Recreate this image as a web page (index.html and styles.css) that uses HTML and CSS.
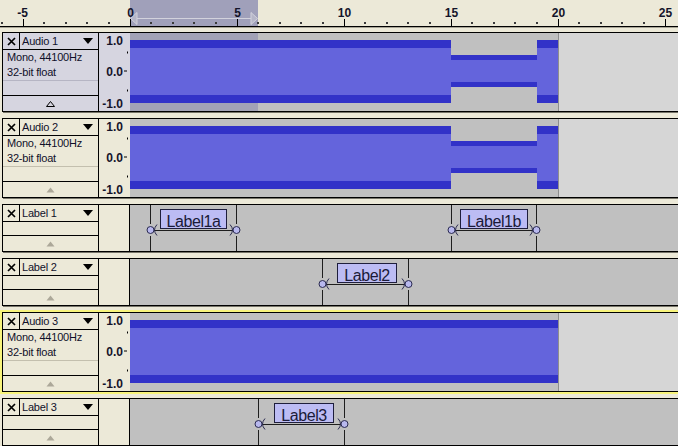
FILE: index.html
```html
<!DOCTYPE html>
<html lang="en">
<head>
<meta charset="UTF-8">
<title>Audacity</title>
<link rel="stylesheet" href="styles.css">
</head>
<body>

<!-- time ruler: 0 s at x=130, 21.4 px per second -->
<div class="ruler">
    <svg width="678" height="26">
        <rect class="ruler-sel" x="130" y="0" width="128" height="26"/>
        <g class="play-region">
            <path d="M137 18.5H251"/>
            <path d="M137 12.5L130.5 18.5L137 24.5Z"/>
            <path d="M251 12.5L257.5 18.5L251 24.5Z"/>
        </g>
        <g class="tick-minor">
            <rect x="1" y="22" width="2" height="2"/>
            <rect x="43" y="22" width="2" height="2"/>
            <rect x="65" y="22" width="2" height="2"/>
            <rect x="86" y="22" width="2" height="2"/>
            <rect x="108" y="22" width="2" height="2"/>
            <rect x="150" y="22" width="2" height="2"/>
            <rect x="172" y="22" width="2" height="2"/>
            <rect x="193" y="22" width="2" height="2"/>
            <rect x="215" y="22" width="2" height="2"/>
            <rect x="257" y="22" width="2" height="2"/>
            <rect x="279" y="22" width="2" height="2"/>
            <rect x="300" y="22" width="2" height="2"/>
            <rect x="322" y="22" width="2" height="2"/>
            <rect x="364" y="22" width="2" height="2"/>
            <rect x="386" y="22" width="2" height="2"/>
            <rect x="407" y="22" width="2" height="2"/>
            <rect x="429" y="22" width="2" height="2"/>
            <rect x="471" y="22" width="2" height="2"/>
            <rect x="493" y="22" width="2" height="2"/>
            <rect x="514" y="22" width="2" height="2"/>
            <rect x="536" y="22" width="2" height="2"/>
            <rect x="578" y="22" width="2" height="2"/>
            <rect x="600" y="22" width="2" height="2"/>
            <rect x="621" y="22" width="2" height="2"/>
            <rect x="643" y="22" width="2" height="2"/>
        </g>
        <g class="tick-major">
            <rect x="23" y="19" width="1" height="7"/>
            <rect x="130" y="19" width="1" height="7"/>
            <rect x="237" y="19" width="1" height="7"/>
            <rect x="344" y="19" width="1" height="7"/>
            <rect x="451" y="19" width="1" height="7"/>
            <rect x="558" y="19" width="1" height="7"/>
            <rect x="665" y="19" width="1" height="7"/>
        </g>
        <g class="ruler-num">
            <text x="22.5" y="17">-5</text>
            <text x="130.5" y="17">0</text>
            <text x="237.5" y="17">5</text>
            <text x="344.5" y="17">10</text>
            <text x="451.5" y="17">15</text>
            <text x="558.5" y="17">20</text>
            <text x="665.5" y="17">25</text>
        </g>
    </svg>
</div>

<!-- Audio 1 (selected) -->
<div class="track audio sel">
    <div class="ctrl">
        <div class="head">
            <span class="close"><svg width="9" height="9"><path d="M1 1L8 8M8 1L1 8"/></svg></span>
            <span class="name">Audio 1<i class="menu"></i></span>
        </div>
        <div class="info">Mono, 44100Hz<br>32-bit float</div>
        <div class="blank"></div>
        <div class="fold"><svg width="9" height="6"><polygon points="0.5,5.5 4.5,0.5 8.5,5.5"/></svg></div>
    </div>
    <div class="vruler">
        <svg width="31" height="78">
            <text x="24" y="12">1.0</text>
            <text x="24" y="42.5">0.0</text>
            <text x="24" y="75">-1.0</text>
            <rect x="25" y="37.5" width="3" height="1"/>
            <rect x="28" y="18.5" width="1" height="2"/>
            <rect x="28" y="56.5" width="1" height="2"/>
        </svg>
    </div>
    <div class="wave">
        <svg width="548" height="78">
            <rect class="w-bg" width="548" height="78"/>
            <rect class="w-sel" width="128" height="78"/>
            <rect class="w-blank" x="428" width="120" height="78"/>
            <rect class="w-end" x="428" width="1" height="78"/>
            <path class="w-peak" d="M0 7H321V22H407V7H428V70H407V54H321V70H0Z"/>
            <path class="w-rms" d="M0 15H321V27H407V15H428V62H407V49H321V62H0Z"/>
        </svg>
    </div>
</div>

<!-- Audio 2 -->
<div class="track audio">
    <div class="ctrl">
        <div class="head">
            <span class="close"><svg width="9" height="9"><path d="M1 1L8 8M8 1L1 8"/></svg></span>
            <span class="name">Audio 2<i class="menu"></i></span>
        </div>
        <div class="info">Mono, 44100Hz<br>32-bit float</div>
        <div class="blank"></div>
        <div class="fold"><svg width="9" height="6"><polygon points="0.5,5.5 4.5,0.5 8.5,5.5"/></svg></div>
    </div>
    <div class="vruler">
        <svg width="31" height="78">
            <text x="24" y="12">1.0</text>
            <text x="24" y="42.5">0.0</text>
            <text x="24" y="75">-1.0</text>
            <rect x="25" y="37.5" width="3" height="1"/>
            <rect x="28" y="18.5" width="1" height="2"/>
            <rect x="28" y="56.5" width="1" height="2"/>
        </svg>
    </div>
    <div class="wave">
        <svg width="548" height="78">
            <rect class="w-bg" width="548" height="78"/>
            <rect class="w-blank" x="428" width="120" height="78"/>
            <rect class="w-end" x="428" width="1" height="78"/>
            <path class="w-peak" d="M0 7H321V22H407V7H428V70H407V54H321V70H0Z"/>
            <path class="w-rms" d="M0 15H321V27H407V15H428V62H407V49H321V62H0Z"/>
        </svg>
    </div>
</div>

<!-- Label 1 -->
<div class="track label">
    <div class="ctrl">
        <div class="head">
            <span class="close"><svg width="9" height="9"><path d="M1 1L8 8M8 1L1 8"/></svg></span>
            <span class="name">Label 1<i class="menu"></i></span>
        </div>
        <div class="blank"></div>
        <div class="fold"><svg width="9" height="6"><polygon points="0.5,5.5 4.5,0.5 8.5,5.5"/></svg></div>
    </div>
    <div class="vruler"></div>
    <div class="wave">
        <svg width="548" height="46">
            <rect class="w-bg" width="548" height="46"/>
            <g class="lbl">
                <path class="edge" d="M20.5 0V19M20.5 31V46M106.5 0V19M106.5 31V46"/>
                <path class="link" d="M24 25.5H103"/>
                <circle class="grip" cx="20.5" cy="25" r="3.5"/>
                <circle class="grip" cx="106.5" cy="25" r="3.5"/>
                <path class="hook" d="M27 19.5Q22 25 27 30.5M100 19.5Q105 25 100 30.5"/>
                <rect class="box" x="30.5" y="4.5" width="66" height="19"/>
                <text x="63.5" y="21.5">Label1a</text>
            </g>
            <g class="lbl">
                <path class="edge" d="M321.5 0V19M321.5 31V46M406.5 0V19M406.5 31V46"/>
                <path class="link" d="M325 25.5H403"/>
                <circle class="grip" cx="321.5" cy="25" r="3.5"/>
                <circle class="grip" cx="406.5" cy="25" r="3.5"/>
                <path class="hook" d="M328 19.5Q323 25 328 30.5M400 19.5Q405 25 400 30.5"/>
                <rect class="box" x="330.5" y="4.5" width="67" height="19"/>
                <text x="364" y="21.5">Label1b</text>
            </g>
        </svg>
    </div>
</div>

<!-- Label 2 -->
<div class="track label">
    <div class="ctrl">
        <div class="head">
            <span class="close"><svg width="9" height="9"><path d="M1 1L8 8M8 1L1 8"/></svg></span>
            <span class="name">Label 2<i class="menu"></i></span>
        </div>
        <div class="blank"></div>
        <div class="fold"><svg width="9" height="6"><polygon points="0.5,5.5 4.5,0.5 8.5,5.5"/></svg></div>
    </div>
    <div class="vruler"></div>
    <div class="wave">
        <svg width="548" height="46">
            <rect class="w-bg" width="548" height="46"/>
            <g class="lbl">
                <path class="edge" d="M192.5 0V19M192.5 31V46M278.5 0V19M278.5 31V46"/>
                <path class="link" d="M196 25.5H275"/>
                <circle class="grip" cx="192.5" cy="25" r="3.5"/>
                <circle class="grip" cx="278.5" cy="25" r="3.5"/>
                <path class="hook" d="M199 19.5Q194 25 199 30.5M272 19.5Q277 25 272 30.5"/>
                <rect class="box" x="207.5" y="4.5" width="59" height="19"/>
                <text x="237" y="21.5">Label2</text>
            </g>
        </svg>
    </div>
</div>

<!-- Audio 3 (has focus) -->
<div class="track audio focus">
    <div class="ctrl">
        <div class="head">
            <span class="close"><svg width="9" height="9"><path d="M1 1L8 8M8 1L1 8"/></svg></span>
            <span class="name">Audio 3<i class="menu"></i></span>
        </div>
        <div class="info">Mono, 44100Hz<br>32-bit float</div>
        <div class="blank"></div>
        <div class="fold"><svg width="9" height="6"><polygon points="0.5,5.5 4.5,0.5 8.5,5.5"/></svg></div>
    </div>
    <div class="vruler">
        <svg width="31" height="78">
            <text x="24" y="12">1.0</text>
            <text x="24" y="42.5">0.0</text>
            <text x="24" y="75">-1.0</text>
            <rect x="25" y="37.5" width="3" height="1"/>
            <rect x="28" y="18.5" width="1" height="2"/>
            <rect x="28" y="56.5" width="1" height="2"/>
        </svg>
    </div>
    <div class="wave">
        <svg width="548" height="78">
            <rect class="w-bg" width="548" height="78"/>
            <rect class="w-blank" x="428" width="120" height="78"/>
            <rect class="w-end" x="428" width="1" height="78"/>
            <rect class="w-peak" width="428" y="7" height="63"/>
            <rect class="w-rms" width="428" y="15" height="47"/>
        </svg>
    </div>
</div>

<!-- Label 3 -->
<div class="track label">
    <div class="ctrl">
        <div class="head">
            <span class="close"><svg width="9" height="9"><path d="M1 1L8 8M8 1L1 8"/></svg></span>
            <span class="name">Label 3<i class="menu"></i></span>
        </div>
        <div class="blank"></div>
        <div class="fold"><svg width="9" height="6"><polygon points="0.5,5.5 4.5,0.5 8.5,5.5"/></svg></div>
    </div>
    <div class="vruler"></div>
    <div class="wave">
        <svg width="548" height="46">
            <rect class="w-bg" width="548" height="46"/>
            <g class="lbl">
                <path class="edge" d="M128.5 0V19M128.5 31V46M214.5 0V19M214.5 31V46"/>
                <path class="link" d="M132 25.5H211"/>
                <circle class="grip" cx="128.5" cy="25" r="3.5"/>
                <circle class="grip" cx="214.5" cy="25" r="3.5"/>
                <path class="hook" d="M135 19.5Q130 25 135 30.5M208 19.5Q213 25 208 30.5"/>
                <rect class="box" x="144.5" y="4.5" width="59" height="19"/>
                <text x="174" y="21.5">Label3</text>
            </g>
        </svg>
    </div>
</div>

</body>
</html>
```

FILE: styles.css
```css
body {
    margin: 0;
    width: 678px;
    height: 446px;
    overflow: hidden;
    background-color: #ece9d8;
    font-family: 'Liberation Sans', Arial, sans-serif;
    color: #10102a;
}
svg {
    display: block;
}

/* time ruler */
.ruler {
    height: 26px;
    border-bottom: 1px solid #000;
    box-shadow: 0 1px 0 #a8a596;
    margin-bottom: 5px;
}
.ruler-sel {
    fill: #a0a0ba;
}
.play-region path {
    fill: #b6b6c8;
    stroke: #d2d2dc;
    stroke-width: 1;
}
.tick-minor rect {
    fill: #3a3a3a;
}
.tick-major rect {
    fill: #000;
}
.ruler-num text {
    font: bold 12px 'Liberation Sans', Arial, sans-serif;
    fill: #14142a;
    text-anchor: middle;
}

/* tracks */
.track {
    display: flex;
    margin: 0 -8px 6px 2px;
    border: 1px solid #000;
    box-shadow: 1px 1px 0 #77756a;
}
.track.audio {
    height: 78px;
}
.track.label {
    height: 46px;
}
.track.focus {
    outline: 2px solid #f8f47c;
}

.ctrl {
    width: 95px;
    flex-shrink: 0;
    display: flex;
    flex-direction: column;
    border-right: 1px solid #000;
    font-size: 11px;
    letter-spacing: -0.2px;
}
.sel .ctrl,
.sel .vruler {
    background-color: #d6d5e0;
}
.head {
    height: 16px;
    display: flex;
    border-bottom: 1px solid #000;
}
.close {
    width: 16px;
    display: flex;
    align-items: center;
    justify-content: center;
    border-right: 1px solid #000;
}
.close path {
    stroke: #000;
    stroke-width: 1.7;
}
.name {
    flex: 1;
    display: flex;
    align-items: center;
    justify-content: space-between;
    padding: 0 5px 0 2px;
}
.menu {
    width: 0;
    height: 0;
    border-left: 5px solid transparent;
    border-right: 5px solid transparent;
    border-top: 6px solid #000;
}
.info {
    height: 30px;
    padding-left: 4px;
    line-height: 15px;
    border-bottom: 1px solid #c3bfae;
}
.sel .info {
    border-bottom-color: #b6b5c4;
}
.blank {
    height: 14px;
    border-bottom: 1px solid #000;
}
.label .blank {
    height: 13px;
}
.fold {
    flex: 1;
    display: flex;
    align-items: center;
    justify-content: center;
}
.fold polygon {
    fill: #aca899;
}
.sel .fold polygon {
    fill: none;
    stroke: #000;
}

/* vertical amplitude ruler */
.vruler {
    width: 31px;
    flex-shrink: 0;
}
.label .vruler {
    width: 30px;
    border-right: 1px solid #000;
}
.vruler text {
    font: bold 12px 'Liberation Sans', Arial, sans-serif;
    fill: #14142a;
    text-anchor: end;
}
.vruler rect {
    fill: #000;
}

/* waveform and label areas */
.wave {
    flex: 1;
    overflow: hidden;
}
.w-bg {
    fill: #c0c0c0;
}
.w-sel {
    fill: #a2a2b6;
}
.w-blank {
    fill: #d6d6d6;
}
.w-end {
    fill: #8e8e8e;
}
.w-peak {
    fill: #3232c8;
}
.w-rms {
    fill: #6464dc;
}

.lbl .edge,
.lbl .link {
    stroke: #1e1e1e;
    fill: none;
}
.lbl .grip {
    fill: #b8b8ee;
    stroke: #2a2a50;
}
.lbl .hook {
    fill: none;
    stroke: #2a2a50;
}
.lbl .box {
    fill: #bcbcf4;
    stroke: #1e1e3c;
}
.lbl text {
    font-size: 16px;
    letter-spacing: -0.4px;
    fill: #1a1a38;
    text-anchor: middle;
}
```
